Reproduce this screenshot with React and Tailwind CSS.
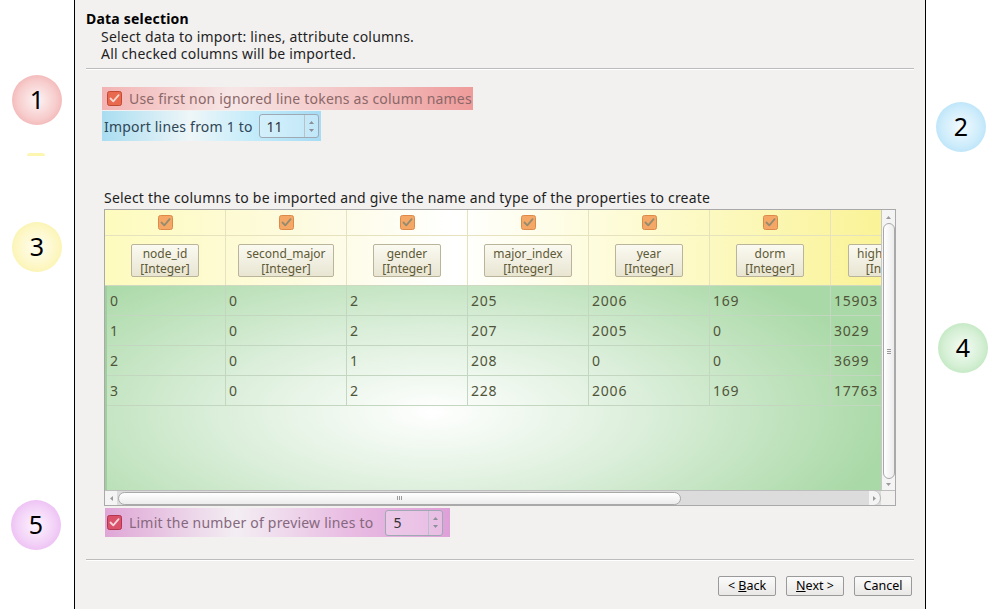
import React from 'react';

const columns = [
  { name: 'node_id', type: '[Integer]' },
  { name: 'second_major', type: '[Integer]' },
  { name: 'gender', type: '[Integer]' },
  { name: 'major_index', type: '[Integer]' },
  { name: 'year', type: '[Integer]' },
  { name: 'dorm', type: '[Integer]' },
  { name: 'high_school', type: '[Integer]' },
];

const rows = [
  ['0', '0', '2', '205', '2006', '169', '15903'],
  ['1', '0', '2', '207', '2005', '0', '3029'],
  ['2', '0', '1', '208', '0', '0', '3699'],
  ['3', '0', '2', '228', '2006', '169', '17763'],
];

const CheckBox = ({ fill, stroke, mark }) => (
  <svg width="15" height="15" viewBox="0 0 15 15" className="shrink-0">
    <rect x="0.5" y="0.5" width="14" height="14" rx="2" fill={fill} stroke={stroke} />
    <path d="M3.5 7.5 L6.3 10.3 L11.6 4.2" fill="none" stroke={mark} strokeWidth="1.8" strokeLinecap="round" strokeLinejoin="round" />
  </svg>
);

const SpinBox = ({ value, className }) => (
  <div className={`flex items-stretch border border-[#9fa9b3] rounded-[3px] bg-white/30 ${className}`}>
    <div className="flex-1 flex items-center pl-[7px] text-[14px] text-[#333]">{value}</div>
    <div className="w-[14px] border-l border-[#b8c0c8] flex flex-col items-center justify-center gap-[5px]">
      <svg width="5" height="3" viewBox="0 0 5 3"><path d="M0 3 L2.5 0 L5 3Z" fill="#8a9096" /></svg>
      <svg width="5" height="3" viewBox="0 0 5 3"><path d="M0 0 L2.5 3 L5 0Z" fill="#8a9096" /></svg>
    </div>
  </div>
);

const Circle = ({ n, cls, pos }) => (
  <div className={`absolute w-[50px] h-[50px] rounded-full flex items-center justify-center text-[25px] text-black ${cls} ${pos}`}>
    {n}
  </div>
);

const Btn = ({ children }) => (
  <button className="w-[58px] h-[20px] border border-[#9a9a9a] rounded-[2px] bg-[linear-gradient(#fbfbfb,#e9e8e6)] text-[12.5px] leading-[18px] text-black">
    {children}
  </button>
);

export default function App() {
  return (
    <div className="relative w-[1000px] h-[609px] overflow-hidden bg-white flex font-['Noto_Sans',sans-serif]">
      <div className="w-[74px] shrink-0" />
      <div className="w-[852px] shrink-0 h-full border-x border-black bg-[#f2f1f0] px-[11px] flex flex-col">
        <div className="pt-[11px] text-[14px] tracking-[0.2px] leading-[16px] font-bold text-black">Data selection</div>
        <div className="mt-[1px] pl-[15px] text-[14px] tracking-[0.2px] leading-[17px] text-[#1e1e1e]">
          <div>Select data to import: lines, attribute columns.</div>
          <div>All checked columns will be imported.</div>
        </div>
        <div className="mt-[6px] h-[2px] border-t border-[#bcbcbc] border-b border-b-white" />

        <div className="mt-[17px] ml-[16px] w-[371px] h-[23px] flex items-center gap-[7px] pl-[5px] bg-[linear-gradient(90deg,#f3b3b3_0%,#f7e6e6_35%,#f3c0c0_70%,#ef9b9b_100%)]">
          <CheckBox fill="#e8694e" stroke="#c24a33" mark="#f5d8d0" />
          <span className="text-[14px] tracking-[0.2px] text-[#8a6868] whitespace-nowrap">Use first non ignored line tokens as column names</span>
        </div>
        <div className="mt-[1px] ml-[16px] w-[219px] h-[30px] flex items-center pl-[2px] bg-[linear-gradient(90deg,#a9ddf1_0%,#eef6f8_40%,#c2ebfa_70%,#a6dcf5_100%)]">
          <span className="text-[14px] tracking-[0.2px] text-[#2f4656] whitespace-nowrap">Import lines from 1 to</span>
          <SpinBox value="11" className="ml-[6px] w-[60px] h-[24px] shrink-0" />
        </div>

        <div className="mt-[49px] ml-[18px] text-[14px] tracking-[0.2px] leading-[16px] text-[#1e1e1e] whitespace-nowrap">
          Select the columns to be imported and give the name and type of the properties to create
        </div>

        <div className="mt-[3px] ml-[18px] w-[792px] h-[297px] border border-[#a9a9a9] flex flex-col">
          <div className="flex h-[280px]">
            <div className="w-[776px] h-full overflow-hidden flex flex-col">
              <div className="h-[76px] shrink-0 bg-[linear-gradient(90deg,#fefbbe_0%,#fdfbdf_25%,#ffffff_45%,#fdfbd0_70%,#faf397_100%)]">
                <div className="flex h-[26px] border-b border-[#e6e2bd]">
                  {columns.map((c, i) => (
                    <div key={i} className="w-[121px] shrink-0 border-r border-[#e6e2bd] flex items-center justify-center">
                      <CheckBox fill="#f5a766" stroke="#dc8a4a" mark="#958c70" />
                    </div>
                  ))}
                </div>
                <div className="flex h-[50px] border-b border-[#cfd9c2]">
                  {columns.map((c, i) => (
                    <div key={i} className={`w-[121px] shrink-0 border-r border-[#e6e2bd] flex items-center ${i === 6 ? 'justify-start pl-[17px]' : 'justify-center'}`}>
                      <div className="px-[8px] h-[33px] border border-[#b9b49a] rounded-[2px] bg-[linear-gradient(#fbfaf1,#e8e5d2)] flex flex-col items-center justify-center text-[12px] leading-[15px] text-[#5e5936] whitespace-nowrap">
                        <span>{c.name}</span>
                        <span>{c.type}</span>
                      </div>
                    </div>
                  ))}
                </div>
              </div>
              <div className="flex-1 border-l-2 border-[#9fcf9c] bg-[radial-gradient(ellipse_60%_90%_at_42%_62%,#ffffff_0%,#dcefdb_45%,#a9d9a6_100%)]">
                {rows.map((r, ri) => (
                  <div key={ri} className="flex h-[30px] border-b border-[#c3d6bf]">
                    {r.map((v, ci) => (
                      <div key={ci} className={`${ci === 0 ? 'w-[119px]' : 'w-[121px]'} shrink-0 border-r border-[#c3d6bf] flex items-center pl-[3px] text-[14px] tracking-[0.8px] text-[#50553a]`}>
                        {v}
                      </div>
                    ))}
                  </div>
                ))}
              </div>
            </div>
            <div className="w-[14px] h-full border-l border-[#c8c8c8] bg-[#f4f4f4] flex flex-col items-center">
              <svg width="5" height="3" viewBox="0 0 5 3" className="mt-[6px]"><path d="M0 3 L2.5 0 L5 3Z" fill="#9a9a9a" /></svg>
              <div className="mt-[4px] w-[12px] flex-1 rounded-full border border-[#a9a9a9] bg-[linear-gradient(90deg,#ffffff,#ececec)] flex items-center justify-center">
                <div className="flex flex-col gap-[1px]">
                  <div className="w-[4px] h-px bg-[#9a9a9a]" />
                  <div className="w-[4px] h-px bg-[#9a9a9a]" />
                  <div className="w-[4px] h-px bg-[#9a9a9a]" />
                </div>
              </div>
              <svg width="5" height="3" viewBox="0 0 5 3" className="my-[4px]"><path d="M0 0 L2.5 3 L5 0Z" fill="#9a9a9a" /></svg>
            </div>
          </div>
          <div className="flex h-[15px] border-t border-[#bdbdbd]">
            <div className="w-[776px] h-full bg-[#dcdcdc] flex items-center">
              <div className="w-[12px] h-full bg-[#f4f4f4] flex items-center justify-center">
                <svg width="3" height="5" viewBox="0 0 3 5"><path d="M3 0 L0 2.5 L3 5Z" fill="#9a9a9a" /></svg>
              </div>
              <div className="ml-[1px] w-[563px] h-[13px] rounded-full border border-[#a9a9a9] bg-[linear-gradient(#ffffff,#ececec)] flex items-center justify-center">
                <div className="flex gap-[1px]">
                  <div className="w-px h-[4px] bg-[#9a9a9a]" />
                  <div className="w-px h-[4px] bg-[#9a9a9a]" />
                  <div className="w-px h-[4px] bg-[#9a9a9a]" />
                </div>
              </div>
              <div className="flex-1" />
              <div className="w-[12px] h-full bg-[#f4f4f4] rounded-r-full border-r border-[#b5b5b5] flex items-center justify-center">
                <svg width="3" height="5" viewBox="0 0 3 5"><path d="M0 0 L3 2.5 L0 5Z" fill="#9a9a9a" /></svg>
              </div>
            </div>
            <div className="w-[14px] h-full bg-[#f2f1f0]" />
          </div>
        </div>

        <div className="mt-[2px] ml-[19px] w-[345px] h-[29px] flex items-center pl-[2px] bg-[linear-gradient(90deg,#dfa6d6_0%,#f3eef3_38%,#e9bde3_70%,#dea0d8_100%)]">
          <CheckBox fill="#d9526a" stroke="#b3354f" mark="#f3d5dc" />
          <span className="ml-[7px] text-[14px] tracking-[0.2px] text-[#86687e] whitespace-nowrap">Limit the number of preview lines to</span>
          <SpinBox value="5" className="ml-[12px] w-[58px] h-[26px] shrink-0" />
        </div>

        <div className="mt-[22px] h-[2px] border-t border-[#bcbcbc] border-b border-b-white" />

        <div className="mt-[15px] flex justify-end gap-[10px] pr-[2px]">
          <Btn>&lt; <span className="underline">B</span>ack</Btn>
          <Btn><span className="underline">N</span>ext &gt;</Btn>
          <Btn>Cancel</Btn>
        </div>
      </div>
      <div className="flex-1" />

      <Circle n="1" cls="bg-[radial-gradient(circle,#fdf4f4_0%,#f7cccc_55%,#ef9c9c_100%)]" pos="left-[12px] top-[75px]" />
      <Circle n="2" cls="bg-[radial-gradient(circle,#f4fbff_0%,#cdecfb_55%,#a6dbf7_100%)]" pos="left-[936px] top-[102px]" />
      <div className="absolute left-[27px] top-[153px] w-[18px] h-[3px] rounded-t-full bg-[#fcf6b0]" />
      <Circle n="3" cls="bg-[radial-gradient(circle,#fffef2_0%,#fdf7c6_55%,#f9ef98_100%)]" pos="left-[12px] top-[222px]" />
      <Circle n="4" cls="bg-[radial-gradient(circle,#f6fcf6_0%,#d4efd4_55%,#ace0ac_100%)]" pos="left-[938px] top-[323px]" />
      <Circle n="5" cls="bg-[radial-gradient(circle,#fdf5fe_0%,#f2d0f7_55%,#e6aaf0_100%)]" pos="left-[11px] top-[500px]" />
    </div>
  );
}
